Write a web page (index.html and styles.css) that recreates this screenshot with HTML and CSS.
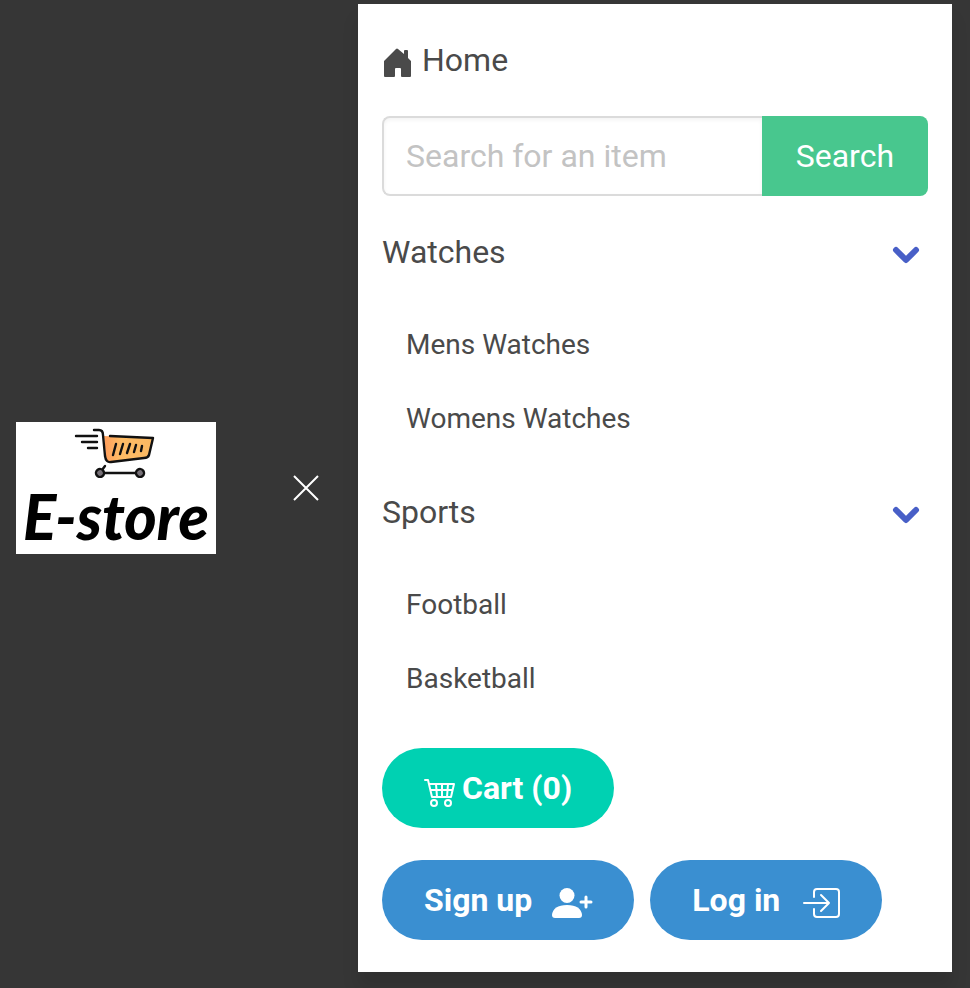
FILE: index.html
```html
<!DOCTYPE html>
<html lang="en">
<head>
<meta charset="utf-8">
<meta name="viewport" content="width=device-width, initial-scale=1">
<title>E-store</title>
<link rel="stylesheet" href="styles.css">
</head>
<body>
<header class="navbar">
  <div class="brand">
    <a class="logo" href="#">
      <svg class="logo-cart" viewBox="0 0 82 50" aria-hidden="true">
        <defs>
          <linearGradient id="basket" x1="0" y1="0" x2="1" y2="0">
            <stop offset="0" stop-color="#ff9d5c"/>
            <stop offset=".35" stop-color="#ffbd66"/>
            <stop offset="1" stop-color="#f9b862"/>
          </linearGradient>
        </defs>
        <path d="M30 8L79 10L75 28Q74 30 70 30L37 34Q32 34 32 29Z" fill="url(#basket)"/>
        <g fill="none" stroke="#111" stroke-width="2.400" stroke-linecap="round" stroke-linejoin="round">
          <path d="M20 2H25Q29 2 29 7L31 28Q32 35 37 34L70 30Q74 30 75 27L79 10L36 8"/>
          <path d="M2 8H23M8 14H23M14 20H23M31 38L28 42M30 45H62"/>
          <path d="M42 16L39 27M49 16L46 26M56 16L53 25M62 17L60 24M68 18L67 23"/>
          <ellipse cx="26" cy="45" rx="4" ry="4" transform="rotate(-35 26 45)" fill="#777178"/>
          <ellipse cx="66" cy="45" rx="4" ry="4" transform="rotate(-35 66 45)" fill="#777178"/>
        </g>
      </svg>
      <span class="logo-name">E-store</span>
    </a>
    <button class="close" type="button" aria-label="Close menu">
      <svg viewBox="0 0 26 26" aria-hidden="true"><path d="M1 1L25 25M25 1L1 25"/></svg>
    </button>
  </div>
  <nav class="menu">
    <a class="home" href="#">
      <svg class="home-icon" viewBox="0 0 28 30" aria-hidden="true"><path d="M0 13L12 1Q13 0 14 1L20 6V3Q20 2 21 2H23Q24 2 24 3V10L27 13V28Q27 29 26 29H18Q17 29 17 28V21Q17 20 16 20H12Q11 20 11 21V28Q11 29 10 29H1Q0 29 0 28Z"/></svg>
      <span>Home</span>
    </a>
    <form class="search">
      <input class="search-input" type="text" placeholder="Search for an item" aria-label="Search for an item">
      <button class="search-button" type="button">Search</button>
    </form>
    <a class="heading" href="#"><span>Watches</span>
      <svg class="chevron" viewBox="0 0 28 20" aria-hidden="true"><path d="M4 5L14 15L24 5"/></svg>
    </a>
    <ul class="submenu">
      <li><a href="#">Mens Watches</a></li>
      <li><a href="#">Womens Watches</a></li>
    </ul>
    <a class="heading" href="#"><span>Sports</span>
      <svg class="chevron" viewBox="0 0 28 20" aria-hidden="true"><path d="M4 5L14 15L24 5"/></svg>
    </a>
    <ul class="submenu">
      <li><a href="#">Football</a></li>
      <li><a href="#">Basketball</a></li>
    </ul>
    <div class="actions">
      <a class="pill pill-cart" href="#">
        <svg class="cart-icon" viewBox="0 0 32 32" aria-hidden="true"><path class="line" d="M1 5H4L8 22H27L30 9H5M7 15H28M12 9L13 22M18 9V22M24 9L23 22"/><circle class="line" cx="10" cy="28" r="3"/><circle class="line" cx="24" cy="28" r="3"/></svg>
        <span>Cart (0)</span>
      </a>
    </div>
    <div class="actions">
      <a class="pill pill-account" href="#">
        <span>Sign up</span>
        <svg class="account-icon" viewBox="0 0 42 32" aria-hidden="true"><circle cx="15" cy="8.500" r="7.500"/><path d="M0 28Q1 18 15 18Q29 18 30 28Q30 31 27 31H3Q0 31 0 28Z"/><path class="line plus" d="M29 15H39M34 10V20"/></svg>
      </a>
      <a class="pill pill-account" href="#">
        <span>Log in</span>
        <svg class="account-icon" viewBox="0 0 42 32" aria-hidden="true"><path class="line" d="M14 10V5Q14 2 17 2H36Q39 2 39 5V27Q39 30 36 30H17Q14 30 14 27V22M4 16H29M21 8L29 16L21 24"/></svg>
      </a>
    </div>
  </nav>
</header>
</body>
</html>
```
FILE: styles.css
```css
* { box-sizing: border-box; }

body {
  margin: 0;
  min-height: 100vh;
  background: #363636;
  color: #4a4a4a;
  font-family: Roboto, sans-serif;
  font-size: 32px;
  line-height: 48px;
}

a { color: inherit; text-decoration: none; }

button, input { font: inherit; }

.navbar {
  display: flex;
  align-items: center;
  padding: 4px 18px 16px 16px;
}

.brand {
  display: flex;
  align-items: center;
  gap: 76px;
  padding-right: 38px;
}

.logo {
  display: flex;
  flex-direction: column;
  align-items: center;
  width: 200px;
  height: 132px;
  padding-top: 6px;
  background: #fff;
  color: #000;
}

.logo-cart { width: 82px; height: 50px; margin-right: 2px; }

.logo-name {
  font-family: Lato, sans-serif;
  font-size: 62px;
  font-style: italic;
  font-weight: 900;
  line-height: 76px;
}

.close {
  width: 28px;
  height: 28px;
  padding: 1px;
  border: 0;
  background: none;
}

.close svg {
  display: block;
  stroke: #fff;
  stroke-width: 2;
}

.menu {
  display: flex;
  flex: 1;
  flex-direction: column;
  gap: 32px;
  min-width: 0;
  padding: 32px 24px;
  background: #fff;
  box-shadow: 0 16px 16px rgba(10, 10, 10, .1);
}

.home { display: flex; align-items: center; gap: 10px; }

.home-icon {
  width: 28px;
  height: 30px;
  margin: 6px 0 0 2px;
  fill: #4a4a4a;
}

.search { display: flex; height: 80px; margin: 0; }

.search-input {
  flex: 1;
  min-width: 0;
  padding: 0 22px;
  border: 2px solid #dbdbdb;
  border-right: 0;
  border-radius: 8px 0 0 8px;
  box-shadow: inset 0 2px 4px rgba(10, 10, 10, .05);
  color: #363636;
}

.search-input::placeholder { color: #c3c3c3; opacity: 1; }

.search-button {
  padding: 0 34px;
  border: 0;
  border-radius: 0 8px 8px 0;
  background: #48c78e;
  color: #fff;
}

.heading {
  display: flex;
  align-items: center;
  justify-content: space-between;
  padding-right: 8px;
}

.chevron {
  width: 28px;
  height: 20px;
  margin-top: 6px;
  fill: none;
  stroke: #485fc7;
  stroke-width: 6;
  stroke-linecap: round;
  stroke-linejoin: round;
}

.submenu {
  margin: 0;
  padding: 0;
  list-style: none;
  font-size: 28px;
  line-height: 42px;
}

.submenu a { display: block; padding: 16px 24px; }

.actions { display: flex; flex-wrap: wrap; gap: 16px; }

.pill {
  display: flex;
  align-items: center;
  height: 80px;
  padding: 0 42px;
  border-radius: 40px;
  color: #fff;
  font-weight: 700;
}

.pill svg { margin-top: 6px; fill: #fff; }

.pill-cart { gap: 6px; background: #00d1b2; }

.pill-account { gap: 20px; padding-right: 40px; background: #3a8fd1; }

.cart-icon { width: 32px; height: 32px; }

.account-icon { width: 42px; height: 32px; }

.pill .line {
  fill: none;
  stroke: #fff;
  stroke-width: 2;
  stroke-linecap: round;
  stroke-linejoin: round;
}

.pill .plus { stroke-width: 3; }
```
